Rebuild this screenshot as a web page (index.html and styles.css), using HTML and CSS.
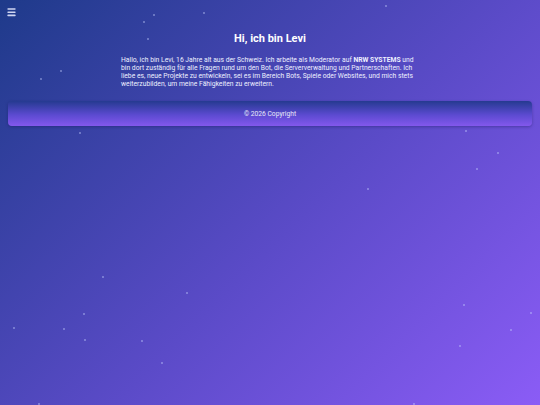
FILE: index.html
```html
<!DOCTYPE html>
<html lang="de">
<head>
<meta charset="utf-8">
<title>Levi</title>
<link rel="stylesheet" href="styles.css">
</head>
<body>
<div class="stars">
  <span class="star" style="left:153px;top:14px"></span>
  <span class="star" style="left:143px;top:21px"></span>
  <span class="star" style="left:147px;top:38px"></span>
  <span class="star" style="left:203px;top:12px"></span>
  <span class="star" style="left:385px;top:5px"></span>
  <span class="star" style="left:60px;top:70px"></span>
  <span class="star" style="left:40px;top:78px"></span>
  <span class="star" style="left:497px;top:152px"></span>
  <span class="star" style="left:476px;top:168px"></span>
  <span class="star" style="left:367px;top:188px"></span>
  <span class="star" style="left:186px;top:292px"></span>
  <span class="star" style="left:102px;top:276px"></span>
  <span class="star" style="left:463px;top:304px"></span>
  <span class="star" style="left:530px;top:312px"></span>
  <span class="star" style="left:510px;top:329px"></span>
  <span class="star" style="left:459px;top:345px"></span>
  <span class="star" style="left:413px;top:403px"></span>
  <span class="star" style="left:83px;top:313px"></span>
  <span class="star" style="left:13px;top:327px"></span>
  <span class="star" style="left:63px;top:328px"></span>
  <span class="star" style="left:84px;top:339px"></span>
  <span class="star" style="left:141px;top:340px"></span>
  <span class="star" style="left:161px;top:362px"></span>
  <span class="star" style="left:38px;top:403px"></span>
  <span class="star" style="left:79px;top:132px"></span>
  <span class="star" style="left:465px;top:130px"></span>
</div>
<header class="topbar">
  <button class="menu" aria-label="Menü">
    <svg width="9" height="9" viewBox="0 0 9 9" aria-hidden="true">
      <rect x="0.3" y="0.2" width="8.4" height="1.6" rx="0.8" fill="#cfd6f2"/>
      <rect x="0.3" y="3.5" width="8.4" height="1.6" rx="0.8" fill="#cfd6f2"/>
      <rect x="0.3" y="6.6" width="8.4" height="1.6" rx="0.8" fill="#cfd6f2"/>
    </svg>
  </button>
</header>
<main class="content">
  <h1 class="title">Hi, ich bin Levi</h1>
  <p class="intro">Hallo, ich bin Levi, 16 Jahre alt aus der Schweiz. Ich arbeite als Moderator auf <strong>NRW SYSTEMS</strong> und bin dort zuständig für alle Fragen rund um den Bot, die Serververwaltung und Partnerschaften. Ich liebe es, neue Projekte zu entwickeln, sei es im Bereich Bots, Spiele oder Websites, und mich stets weiterzubilden, um meine Fähigkeiten zu erweitern.</p>
</main>
<footer class="footer">© 2026 Copyright</footer>
</body>
</html>
```

FILE: styles.css
```css
html, body {
  margin: 0;
  padding: 0;
}
html {
  min-height: 100%;
  background: linear-gradient(135deg, #1e3a8a 0%, #5b4bc8 55%, #8b5cf6 100%);
}
body {
  min-height: 405px;
  font-family: Roboto, "Liberation Sans", sans-serif;
  color: #fff;
  position: relative;
  overflow: hidden;
}
.stars {
  position: absolute;
  inset: 0;
  pointer-events: none;
}
.star {
  position: absolute;
  width: 1.5px;
  height: 1.5px;
  border-radius: 50%;
  background: rgba(200, 210, 255, 0.45);
}
.topbar {
  height: 24px;
  display: flex;
  align-items: flex-start;
  padding: 8px 0 0 7px;
  box-sizing: border-box;
}
.menu {
  background: none;
  border: 0;
  padding: 0;
  display: block;
  line-height: 0;
}
.content {
  width: 298px;
  margin: 7px auto 0;
  position: relative;
}
.title {
  margin: 0;
  text-align: center;
  font-size: 11px;
  line-height: 16px;
  font-weight: 700;
}
.intro {
  margin: 9px 0 0;
  font-size: 6.75px;
  line-height: 8px;
  color: #eef0ff;
}
.intro strong {
  font-weight: 700;
  line-height: 8px;
}
.footer {
  position: relative;
  margin: 13px 8px 0;
  height: 25px;
  border-radius: 4px;
  background: linear-gradient(180deg, #253a90 0%, #5b4ad0 55%, #8358ec 100%);
  box-shadow: 0 1px 3px rgba(20, 20, 80, 0.35);
  display: flex;
  align-items: center;
  justify-content: center;
  font-size: 6.7px;
  color: #e8e8f8;
}
```
